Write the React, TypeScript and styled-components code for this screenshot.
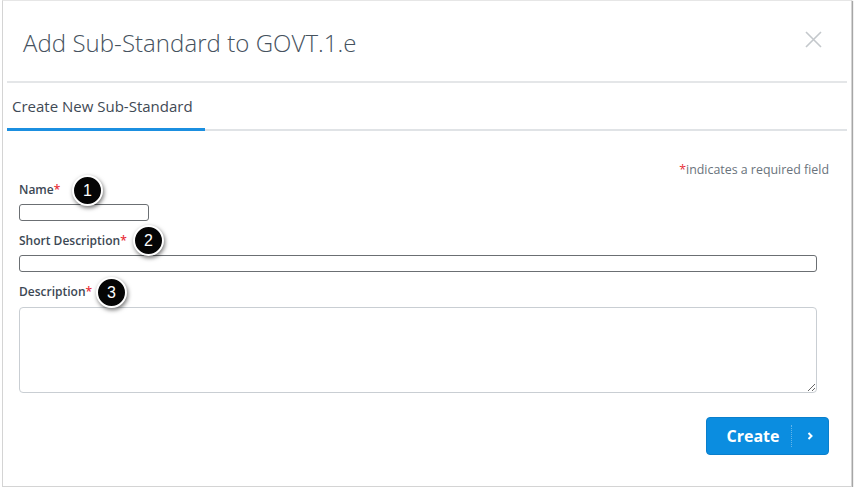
import React from "react";
import styled, { createGlobalStyle } from "styled-components";

const GlobalStyle = createGlobalStyle`
  html, body {
    margin: 0;
    padding: 0;
    background: #ffffff;
    font-family: "Open Sans", "Liberation Sans", sans-serif;
  }
`;

const Dialog = styled.div`
  position: relative;
  box-sizing: border-box;
  margin-left: 2px;
  width: 850px;
  height: 487px;
  padding: 0 4px;
  background: #fff;
  border: 1px solid #d4d4d4;
  border-top-color: #e6e6e6;
  box-shadow: 1px 1px 1px rgba(0, 0, 0, 0.35);
`;

const Header = styled.div`
  display: flex;
  align-items: center;
  justify-content: space-between;
  height: 80px;
  padding: 0 24px 0 16px;
  border-bottom: 2px solid #e4e6e8;
`;

const Title = styled.h1`
  margin: 0;
  padding-top: 3px;
  font-size: 24px;
  font-weight: 300;
  color: #46525e;
  letter-spacing: 0.05px;
`;

const CloseButton = styled.button`
  border: 0;
  background: none;
  padding: 0;
  width: 19px;
  height: 19px;
  margin-top: -4px;
  cursor: pointer;
`;

const Tabs = styled.div`
  display: flex;
  height: 46px;
  border-bottom: 2px solid #e0e3e6;
`;

const Tab = styled.div<{ $active?: boolean }>`
  display: flex;
  align-items: center;
  width: 198px;
  box-sizing: border-box;
  padding: 0 5px 0;
  font-size: 15px;
  color: #3f4a55;
  border-bottom: 3px solid ${(p) => (p.$active ? "#1b8fe0" : "transparent")};
  margin-bottom: -2px;
`;

const Form = styled.form`
  display: flex;
  flex-direction: column;
  padding: 30px 18px 0 12px;
`;

const Note = styled.div`
  align-self: flex-end;
  font-size: 12.4px;
  color: #6a737c;
  margin-bottom: 4px;
`;

const Star = styled.span`
  color: #e8303a;
`;

const Field = styled.div`
  position: relative;
  display: flex;
  flex-direction: column;
  margin-bottom: 12px;
`;

const Label = styled.label`
  font-size: 12px;
  font-weight: 600;
  color: #3c4854;
  line-height: 16px;
  margin-bottom: 6px;
`;

const Input = styled.input<{ $width: number }>`
  box-sizing: border-box;
  width: ${(p) => p.$width}px;
  height: 17px;
  margin: 0;
  border: 1px solid #6b6f73;
  border-radius: 3px;
  background: #fff;
`;

const TextArea = styled.textarea`
  box-sizing: border-box;
  width: 798px;
  height: 86px;
  margin: 1px 0 0;
  border: 1px solid #c9ced3;
  border-radius: 4px;
  background: #fff;
  resize: both;
`;

const Actions = styled.div`
  display: flex;
  justify-content: flex-end;
  margin-top: 12px;
`;

const CreateButton = styled.button`
  display: flex;
  align-items: center;
  height: 38px;
  width: 123px;
  padding: 0;
  border: 1px solid #0a7fcc;
  border-radius: 4px;
  background: #0b8de0;
  color: #fff;
  font-family: "Open Sans", "Liberation Sans", sans-serif;
  font-size: 16px;
  font-weight: 700;
  cursor: pointer;
`;

const ButtonText = styled.span`
  flex: 1;
  text-align: center;
  padding-left: 8px;
`;

const ButtonArrow = styled.span`
  display: flex;
  align-items: center;
  justify-content: center;
  width: 36px;
  height: 22px;
  border-left: 1px dotted rgba(255, 255, 255, 0.35);
`;

const Marker = styled.div<{ $x: number; $y: number }>`
  position: absolute;
  left: ${(p) => p.$x}px;
  top: ${(p) => p.$y}px;
  box-sizing: border-box;
  width: 31px;
  height: 31px;
  border-radius: 50%;
  background: #050505;
  border: 2px solid #fff;
  box-shadow: 1px 2px 4px rgba(0, 0, 0, 0.55);
  color: #fff;
  font-family: "Liberation Sans", Arial, sans-serif;
  font-size: 16px;
  display: flex;
  align-items: center;
  justify-content: center;
  z-index: 2;
`;

const fields = [
  { label: "Name", width: 130, marker: 1, mx: 53, my: -7 },
  { label: "Short Description", width: 798, marker: 2, mx: 114, my: -8 },
];

export default function App() {
  return (
    <>
      <GlobalStyle />
      <Dialog>
        <Header>
          <Title>Add Sub-Standard to GOVT.1.e</Title>
          <CloseButton aria-label="Close">
            <svg width="19" height="19" viewBox="0 0 19 19">
              <path d="M2 2L17 17M17 2L2 17" stroke="#c4c8cc" strokeWidth="1.6" />
            </svg>
          </CloseButton>
        </Header>
        <Tabs>
          <Tab $active>Create New Sub-Standard</Tab>
        </Tabs>
        <Form onSubmit={(e) => e.preventDefault()}>
          <Note>
            <Star>*</Star>indicates a required field
          </Note>
          {fields.map((f) => (
            <Field key={f.label}>
              <Label>
                {f.label}
                <Star>*</Star>
              </Label>
              <Input $width={f.width} />
              <Marker $x={f.mx} $y={f.my}>
                {f.marker}
              </Marker>
            </Field>
          ))}
          <Field>
            <Label>
              Description<Star>*</Star>
            </Label>
            <TextArea />
            <Marker $x={77} $y={-7}>
              3
            </Marker>
          </Field>
          <Actions>
            <CreateButton type="submit">
              <ButtonText>Create</ButtonText>
              <ButtonArrow>
                <svg width="8" height="10" viewBox="0 0 8 10">
                  <path d="M2.5 2L5.5 5L2.5 8" stroke="#fff" strokeWidth="2" fill="none" />
                </svg>
              </ButtonArrow>
            </CreateButton>
          </Actions>
        </Form>
      </Dialog>
    </>
  );
}
